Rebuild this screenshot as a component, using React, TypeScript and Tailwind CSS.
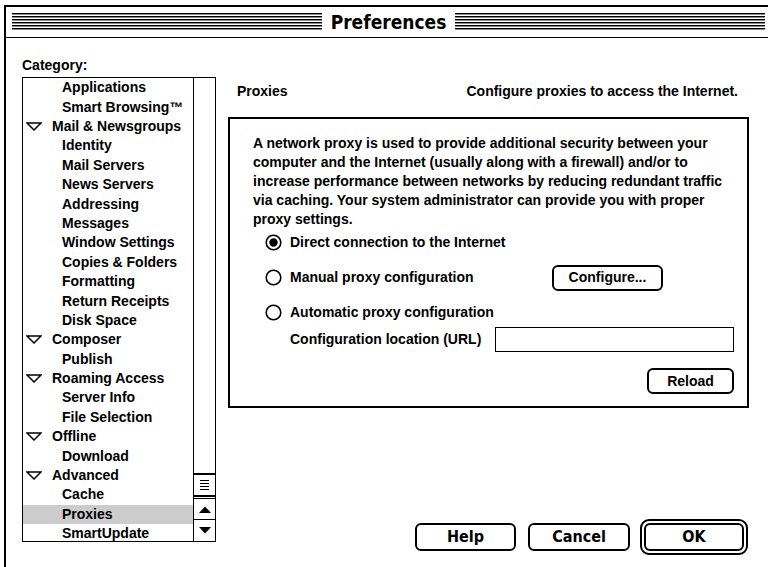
import React from "react";

const categories = [
  { label: "Applications", parent: false },
  { label: "Smart Browsing™", parent: false },
  { label: "Mail & Newsgroups", parent: true },
  { label: "Identity", parent: false },
  { label: "Mail Servers", parent: false },
  { label: "News Servers", parent: false },
  { label: "Addressing", parent: false },
  { label: "Messages", parent: false },
  { label: "Window Settings", parent: false },
  { label: "Copies & Folders", parent: false },
  { label: "Formatting", parent: false },
  { label: "Return Receipts", parent: false },
  { label: "Disk Space", parent: false },
  { label: "Composer", parent: true },
  { label: "Publish", parent: false },
  { label: "Roaming Access", parent: true },
  { label: "Server Info", parent: false },
  { label: "File Selection", parent: false },
  { label: "Offline", parent: true },
  { label: "Download", parent: false },
  { label: "Advanced", parent: true },
  { label: "Cache", parent: false },
  { label: "Proxies", parent: false },
  { label: "SmartUpdate", parent: false },
];

const paragraph = [
  "A network proxy is used to provide additional security between your",
  "computer and the Internet (usually along with a firewall) and/or to",
  "increase performance between networks by reducing redundant traffic",
  "via caching. Your system administrator can provide you with proper",
  "proxy settings.",
];

function Stripes() {
  return (
    <div className="flex-1 h-[18px] bg-[repeating-linear-gradient(to_bottom,#000_0px,#000_1px,#8a8a8a_1px,#8a8a8a_2px,#fff_2px,#fff_3px)]" />
  );
}

function Disclosure() {
  return (
    <svg width="16" height="9" viewBox="0 0 16 9" className="shrink-0">
      <polygon points="1,1 15,1 8,8" fill="#fff" stroke="#000" strokeWidth="1.5" strokeLinejoin="miter" />
    </svg>
  );
}

function Radio({ checked }: { checked?: boolean }) {
  return (
    <svg width="17" height="17" viewBox="0 0 17 17" className="shrink-0">
      <circle cx="8.5" cy="8.5" r="7.3" fill="#fff" stroke="#000" strokeWidth="1.6" />
      {checked && <circle cx="8.5" cy="8.5" r="4.2" fill="#000" />}
    </svg>
  );
}

function MacButton({ children, className }: { children: React.ReactNode; className: string }) {
  return (
    <div className={`flex items-center justify-center border-2 border-black rounded-[6px] bg-white ${className}`}>
      {children}
    </div>
  );
}

export default function App() {
  return (
    <div className="w-[768px] h-[567px] overflow-hidden bg-white text-black font-['Liberation_Sans',Arial,sans-serif] font-bold text-[14px]">
      <div className="ml-[4px] mt-[5px] w-[769px] h-[600px] border-2 border-black flex flex-col">
        {/* title bar */}
        <div className="h-[31px] shrink-0 border-b border-black flex items-center px-[6px] gap-[9px]">
          <Stripes />
          <span className="font-['DejaVu_Sans_Condensed','DejaVu_Sans',sans-serif] font-stretch-condensed text-[19px] leading-none">
            Preferences
          </span>
          <Stripes />
        </div>

        <div className="flex flex-row pl-[16px]">
          {/* category column */}
          <div className="flex flex-col pt-[19px]">
            <div className="h-[17px] leading-[17px]">Category:</div>
            <div className="mt-[3px] w-[194px] h-[465px] border border-black flex flex-row">
              <div className="w-[170px] overflow-hidden">
                {categories.map((c) => (
                  <div
                    key={c.label}
                    className={`h-[19.4px] flex items-center whitespace-nowrap ${c.parent ? "pl-[3px] gap-[10px]" : "pl-[39px]"} ${c.label === "Proxies" ? "bg-[#cccccc]" : ""}`}
                  >
                    {c.parent && <Disclosure />}
                    <span>{c.label}</span>
                  </div>
                ))}
              </div>
              <div className="w-[22px] border-l border-black flex flex-col">
                <div className="flex-1" />
                <div className="h-[24px] border-y-2 border-black flex flex-col items-center justify-center gap-[2px]">
                  <div className="w-[9px] h-px bg-black" />
                  <div className="w-[9px] h-px bg-black" />
                  <div className="w-[9px] h-px bg-black" />
                  <div className="w-[9px] h-px bg-black" />
                </div>
                <div className="h-[22px] mt-[1px] border-y border-black flex items-center justify-center">
                  <svg width="12" height="7" viewBox="0 0 12 7">
                    <polygon points="0,7 6,0.5 12,7" fill="#000" />
                  </svg>
                </div>
                <div className="h-[21px] flex items-center justify-center">
                  <svg width="12" height="7" viewBox="0 0 12 7">
                    <polygon points="0,0 12,0 6,6.5" fill="#000" />
                  </svg>
                </div>
              </div>
            </div>
          </div>

          {/* settings column */}
          <div className="ml-[12px] w-[521px] flex flex-col">
            <div className="mt-[45px] h-[17px] leading-[17px] flex justify-between pl-[9px] pr-[11px]">
              <span>Proxies</span>
              <span>Configure proxies to access the Internet.</span>
            </div>

            <div className="mt-[17px] h-[291px] border-2 border-black pl-[23px] pr-[12px] pt-[15px] flex flex-col">
              <div className="leading-[19px]">
                {paragraph.map((line) => (
                  <div key={line} className="whitespace-nowrap">{line}</div>
                ))}
              </div>

              <div className="ml-[12px] mt-[4px] flex flex-col">
                <div className="h-[19px] flex items-center gap-[8px]">
                  <Radio checked />
                  <span>Direct connection to the Internet</span>
                </div>

                <div className="mt-[13px] h-[25px] flex items-center">
                  <div className="w-[287px] flex items-center gap-[8px]">
                    <Radio />
                    <span>Manual proxy configuration</span>
                  </div>
                  <MacButton className="w-[111px] h-[26px]">Configure...</MacButton>
                </div>

                <div className="mt-[13px] h-[19px] flex items-center gap-[8px]">
                  <Radio />
                  <span>Automatic proxy configuration</span>
                </div>

                <div className="mt-[5px] h-[25px] flex items-center pl-[25px]">
                  <span className="w-[205px] whitespace-nowrap">Configuration location (URL)</span>
                  <div className="w-[239px] h-[25px] border border-black" />
                </div>

                <div className="mt-[16px] flex justify-end pr-[1px]">
                  <MacButton className="w-[87px] h-[26px]">Reload</MacButton>
                </div>
              </div>
            </div>

            <div className="mt-[111px] flex justify-end items-center pr-[1px] font-['DejaVu_Sans_Condensed','DejaVu_Sans',sans-serif] font-stretch-condensed text-[16px]">
              <MacButton className="w-[101px] h-[28px]">Help</MacButton>
              <MacButton className="ml-[12px] w-[102px] h-[28px]">Cancel</MacButton>
              <div className="ml-[10px] p-[2px] border-[2px] border-black rounded-[9px]">
                <MacButton className="w-[100px] h-[28px]">OK</MacButton>
              </div>
            </div>
          </div>
        </div>
      </div>
    </div>
  );
}
